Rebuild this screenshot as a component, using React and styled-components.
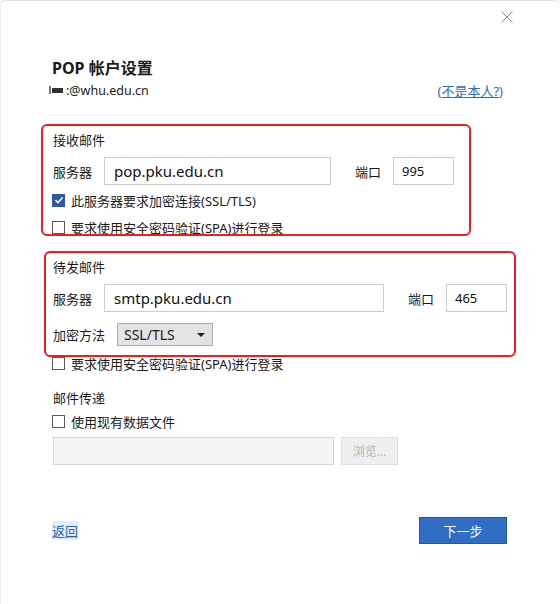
import styled, { createGlobalStyle } from "styled-components";

const GlobalStyle = createGlobalStyle`
  html, body {
    margin: 0;
    padding: 0;
    background: #ffffff;
  }
  * {
    box-sizing: border-box;
  }
`;

const Window = styled.div`
  width: 560px;
  height: 604px;
  background: #fff;
  box-shadow: inset 0 1px 0 #dfe3ea, inset 1px 0 0 #eef0f4;
  border-radius: 6px 6px 0 0;
  font-family: "Noto Sans", "Noto Sans CJK SC", sans-serif;
  color: #1a1a1a;
  font-size: 13px;
  display: flex;
  flex-direction: column;
  overflow: hidden;
`;

const TitleBar = styled.div`
  height: 56px;
  display: flex;
  justify-content: flex-end;
  align-items: flex-start;
  padding: 11px 47px 0 0;
`;

const Header = styled.div`
  display: flex;
  flex-direction: column;
  padding: 0 57px 0 52px;
`;

const Title = styled.h1`
  margin: 0;
  font-size: 16px;
  line-height: 24px;
  font-weight: 700;
`;

const AccountRow = styled.div`
  display: flex;
  justify-content: space-between;
  align-items: center;
  height: 18px;
  margin-top: 1px;
`;

const Account = styled.span`
  display: flex;
  align-items: center;
  gap: 3px;
  margin-left: -3px;
  font-size: 12.5px;
`;

const Redacted = styled.span`
  display: inline-flex;
  align-items: flex-end;
  gap: 1px;
  height: 8px;
  &::before {
    content: "";
    width: 2px;
    height: 8px;
    background: #777;
  }
  &::after {
    content: "";
    width: 11px;
    height: 5px;
    background: #333;
    margin-bottom: 1px;
  }
`;

const Link = styled.a`
  color: #2e6db5;
  text-decoration: underline;
  cursor: pointer;
`;

const Section = styled.div`
  width: ${p => p.$width}px;
  margin: ${p => p.$top}px 0 0 ${p => p.$left}px;
  padding: 5px 0 ${p => p.$bottom}px ${p => p.$pad}px;
  border: 2px solid #e3231e;
  border-radius: 6px;
  display: flex;
  flex-direction: column;
  overflow: hidden;
  height: ${p => p.$height}px;
`;

const Heading = styled.div`
  height: 18px;
  line-height: 18px;
  margin-top: ${p => p.$top || 0}px;
`;

const FieldRow = styled.div`
  display: flex;
  align-items: center;
  height: ${p => p.$h || 28}px;
  margin-top: ${p => p.$top}px;
`;

const Label = styled.span`
  width: ${p => p.$w}px;
  flex-shrink: 0;
`;

const TextInput = styled.div`
  width: ${p => p.$w}px;
  height: 28px;
  border: 1px solid #cdcdcd;
  background: ${p => (p.$disabled ? "#f4f4f4" : "#fff")};
  border-color: ${p => (p.$disabled ? "#d6d6d6" : "#cdcdcd")};
  display: flex;
  align-items: center;
  padding-left: ${p => p.$pl || 9}px;
  font-size: ${p => p.$fs || 13}px;
  color: #111;
  flex-shrink: 0;
`;

const Spacer = styled.span`
  width: ${p => p.$w}px;
  flex-shrink: 0;
`;

const CheckRow = styled.label`
  display: flex;
  align-items: center;
  gap: 6px;
  height: ${p => p.$h || 18}px;
  margin-top: ${p => p.$top}px;
  margin-left: -1px;
  flex-shrink: 0;
`;

const Box = styled.span`
  width: 13px;
  height: 13px;
  border: 1px solid ${p => (p.$checked ? "#2a5ca8" : "#5a5a5a")};
  background: ${p => (p.$checked ? "#2a5ca8" : "#fff")};
  display: flex;
  align-items: center;
  justify-content: center;
  flex-shrink: 0;
`;

const Clip = styled.div`
  height: 15px;
  overflow: hidden;
  display: flex;
  align-items: flex-end;
  padding-left: 53px;
  margin-bottom: -1px;
`;

const Select = styled.div`
  width: 96px;
  height: 23px;
  margin-left: 11px;
  background: #e3e3e3;
  border: 1px solid #acacac;
  display: flex;
  align-items: center;
  justify-content: space-between;
  padding: 0 7px 0 6px;
  font-size: 14px;
`;

const Caret = styled.span`
  width: 0;
  height: 0;
  border-left: 4px solid transparent;
  border-right: 4px solid transparent;
  border-top: 4px solid #222;
`;

const Delivery = styled.div`
  display: flex;
  flex-direction: column;
  padding-left: 53px;
`;

const BrowseButton = styled.button`
  width: 57px;
  height: 28px;
  margin-left: 7px;
  border: 1px solid #dedede;
  background: #efefef;
  color: #b3b3b3;
  font-family: inherit;
  font-size: 12px;
  padding: 0;
`;

const Footer = styled.div`
  display: flex;
  justify-content: space-between;
  align-items: center;
  margin-top: 52px;
  padding: 0 53px 0 52px;
`;

const BackLink = styled(Link)`
  color: #2a64b0;
  background: #e4eefa;
  text-decoration: underline;
  text-decoration-color: #9bbbe0;
`;

const PrimaryButton = styled.button`
  width: 88px;
  height: 27px;
  background: #2f6ec2;
  border: 1px solid #1f5aa6;
  color: #fff;
  font-family: inherit;
  font-size: 13px;
  padding: 0;
`;

const Check = () => (
  <svg width="10" height="10" viewBox="0 0 10 10">
    <path d="M1.5 5.2 L4 7.5 L8.5 2.5" fill="none" stroke="#fff" strokeWidth="1.6" />
  </svg>
);

const CloseIcon = () => (
  <svg width="12" height="12" viewBox="0 0 12 12">
    <path d="M0.5 0.5 L11.5 11.5 M11.5 0.5 L0.5 11.5" stroke="#8a8a8a" strokeWidth="1" />
  </svg>
);

const Checkbox = ({ checked, label, top, h }) => (
  <CheckRow $top={top} $h={h}>
    <Box $checked={checked}>{checked && <Check />}</Box>
    <span>{label}</span>
  </CheckRow>
);

export default function App() {
  return (
    <>
      <GlobalStyle />
      <Window>
        <TitleBar>
          <CloseIcon />
        </TitleBar>
        <Header>
          <Title>POP 帐户设置</Title>
          <AccountRow>
            <Account>
              <Redacted />
              <span>:@whu.edu.cn</span>
            </Account>
            <Link>(不是本人?)</Link>
          </AccountRow>
        </Header>

        <Section $width={430} $left={41} $top={25} $pad={10} $bottom={0} $height={112}>
          <Heading>接收邮件</Heading>
          <FieldRow $top={8}>
            <Label $w={51}>服务器</Label>
            <TextInput $w={227} $fs={15}>pop.pku.edu.cn</TextInput>
            <Spacer $w={24} />
            <Label $w={38}>端口</Label>
            <TextInput $w={61} $pl={8}>995</TextInput>
          </FieldRow>
          <Checkbox checked top={6} label="此服务器要求加密连接(SSL/TLS)" />
          <Checkbox top={9} h={18} label="要求使用安全密码验证(SPA)进行登录" />
        </Section>

        <Section $width={472} $left={44} $top={15} $pad={7} $bottom={9} $height={106}>
          <Heading>待发邮件</Heading>
          <FieldRow $top={8}>
            <Label $w={51}>服务器</Label>
            <TextInput $w={280} $fs={15}>smtp.pku.edu.cn</TextInput>
            <Spacer $w={24} />
            <Label $w={38}>端口</Label>
            <TextInput $w={61} $pl={8}>465</TextInput>
          </FieldRow>
          <FieldRow $top={11} $h={23}>
            <Label $w={53}>加密方法</Label>
            <Select>
              <span>SSL/TLS</span>
              <Caret />
            </Select>
          </FieldRow>
        </Section>

        <Clip>
          <Checkbox label="要求使用安全密码验证(SPA)进行登录" />
        </Clip>

        <Delivery>
          <Heading $top={18}>邮件传递</Heading>
          <Checkbox top={5} label="使用现有数据文件" />
          <FieldRow $top={7}>
            <TextInput $w={281} $disabled />
            <BrowseButton disabled>浏览...</BrowseButton>
          </FieldRow>
        </Delivery>

        <Footer>
          <BackLink>返回</BackLink>
          <PrimaryButton>下一步</PrimaryButton>
        </Footer>
      </Window>
    </>
  );
}
